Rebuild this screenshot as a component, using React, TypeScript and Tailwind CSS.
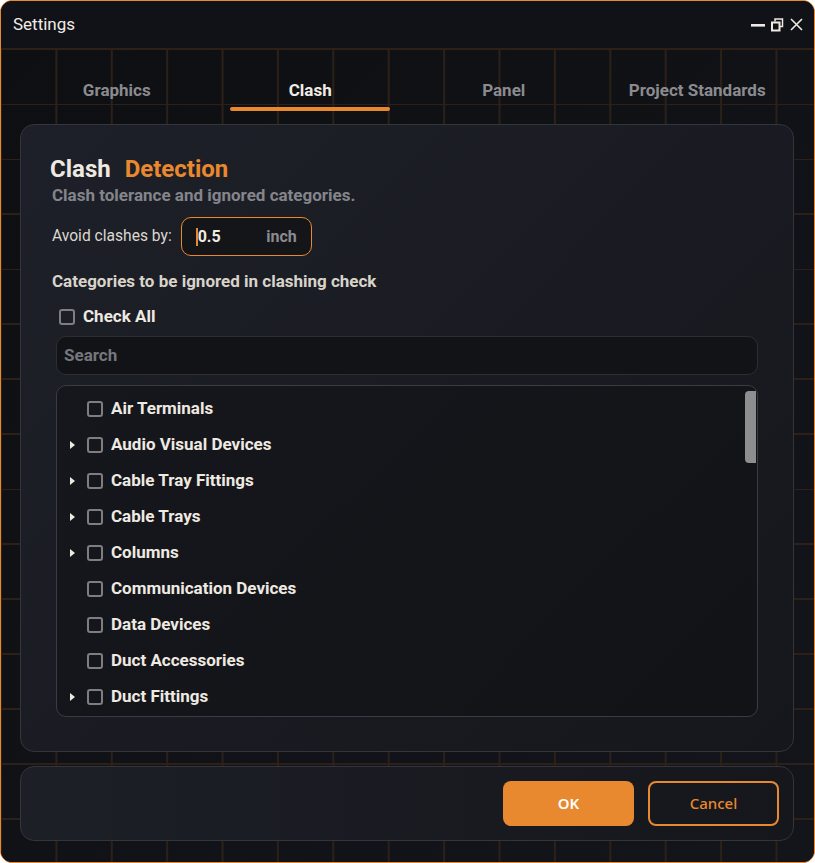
import React from 'react';

const categories: { name: string; expandable: boolean }[] = [
    { name: 'Air Terminals', expandable: false },
    { name: 'Audio Visual Devices', expandable: true },
    { name: 'Cable Tray Fittings', expandable: true },
    { name: 'Cable Trays', expandable: true },
    { name: 'Columns', expandable: true },
    { name: 'Communication Devices', expandable: false },
    { name: 'Data Devices', expandable: false },
    { name: 'Duct Accessories', expandable: false },
    { name: 'Duct Fittings', expandable: true },
];

const tabs = ['Graphics', 'Clash', 'Panel', 'Project Standards'];

function Checkbox() {
    return <span className="block h-[16px] w-[16px] shrink-0 rounded-[3px] border-2 border-[#7e7e82]" />;
}

export default function App() {
    return (
        <div className="flex h-[863px] w-[815px] flex-col overflow-hidden rounded-[12px] border border-[#e8892f] bg-[#0f1014] font-['Roboto',sans-serif] text-[#eeeae2]">
            {/* title bar */}
            <div className="flex h-[47px] shrink-0 items-center justify-between bg-[#111217] pl-[12px] pr-[11px]">
                <span className="text-[17px] leading-none text-[#f0ede6]">Settings</span>
                <div className="flex items-center gap-[6px]">
                    <svg width="14" height="14" viewBox="0 0 14 14">
                        <rect x="0" y="6" width="14" height="2.6" fill="#eeeae2" />
                    </svg>
                    <svg width="13" height="14" viewBox="0 0 13 14">
                        <path d="M4 3.5V1h7.5v7.5H9" fill="none" stroke="#eeeae2" strokeWidth="1.5" />
                        <rect x="1" y="4.5" width="7.5" height="8" fill="none" stroke="#eeeae2" strokeWidth="2" />
                    </svg>
                    <svg width="13" height="13" viewBox="0 0 13 13">
                        <path d="M1 1l11 11M12 1L1 12" stroke="#eeeae2" strokeWidth="1.6" />
                    </svg>
                </div>
            </div>

            {/* grid area */}
            <div className="flex flex-1 flex-col bg-[linear-gradient(to_right,#2c2018_2px,transparent_2px),linear-gradient(to_bottom,#2c2018_2px,transparent_2px),linear-gradient(135deg,#0e0f12,#13151b)] bg-[size:55.4px_55px,55.4px_55px,100%_100%] bg-[position:-1px_0,-1px_0,0_0] pl-[19px] pr-[20px]">
                {/* tabs */}
                <div className="grid h-[76px] shrink-0 grid-cols-4">
                    {tabs.map((tab) => (
                        <div key={tab} className="flex flex-col items-center pt-[31px]">
                            <span
                                className={
                                    tab === 'Clash'
                                        ? 'text-[17px] font-bold leading-[22px] text-[#f0ece4]'
                                        : 'text-[17px] font-bold leading-[22px] text-[#8b8b8f]'
                                }
                            >
                                {tab}
                            </span>
                            {tab === 'Clash' && <span className="mt-[6px] block h-[4px] w-[160px] rounded-full bg-[#e8892f]" />}
                        </div>
                    ))}
                </div>

                {/* main panel */}
                <div className="flex h-[628px] shrink-0 flex-col rounded-[14px] border border-[#33353d] bg-[linear-gradient(135deg,#1e2029,#16171c)] px-[29px] pt-[30px]">
                    <div className="flex items-center gap-[14px] text-[24px] font-bold leading-[28px]">
                        <span className="text-[#eeeae2]">Clash</span>
                        <span className="text-[#e8892f]">Detection</span>
                    </div>
                    <p className="mt-[2px] pl-[2px] text-[17px] font-bold leading-[20px] text-[#84858b]">
                        Clash tolerance and ignored categories.
                    </p>

                    <div className="mt-[12px] flex items-center pl-[2px]">
                        <span className="text-[15.6px] leading-none text-[#dcd8cf]">Avoid clashes by:</span>
                        <div className="ml-[9px] flex h-[39px] w-[131px] items-center rounded-[10px] border border-[#e8892f] bg-[#141519] pl-[14px] pr-[14px]">
                            <span className="h-[18px] w-[2px] bg-[#e8892f]" />
                            <span className="text-[16px] font-bold text-[#f0ece4]">0.5</span>
                            <span className="ml-auto text-[16px] font-bold text-[#8b8b8f]">inch</span>
                        </div>
                    </div>

                    <p className="mt-[14px] pl-[2px] text-[17px] font-bold leading-[22px] text-[#d9d4ca]">
                        Categories to be ignored in clashing check
                    </p>

                    <label className="mt-[14px] flex h-[22px] items-center gap-[8px] pl-[9px]">
                        <Checkbox />
                        <span className="text-[17px] font-bold text-[#eeeae2]">Check All</span>
                    </label>

                    <div className="mx-[6px] mt-[8px] flex h-[39px] shrink-0 items-center rounded-[10px] border border-[#2c2e35] bg-[#121317] px-[7px]">
                        <span className="text-[17px] font-bold text-[#76777c]">Search</span>
                    </div>

                    <div className="relative mx-[6px] mt-[10px] h-[332px] shrink-0 overflow-hidden rounded-[10px] border border-[#3a3c44] bg-[linear-gradient(135deg,#16171c,#121317)] pt-[5px]">
                        {categories.map((cat) => (
                            <div key={cat.name} className="flex h-[36px] items-center pl-[13px]">
                                <span className="flex w-[17px] shrink-0 items-center">
                                    {cat.expandable && (
                                        <span className="block h-0 w-0 border-y-[4px] border-l-[5px] border-y-transparent border-l-[#eeeae2]" />
                                    )}
                                </span>
                                <Checkbox />
                                <span className="ml-[8px] text-[17px] font-bold text-[#eeeae2]">{cat.name}</span>
                            </div>
                        ))}
                        <span className="absolute right-[1px] top-[5px] h-[72px] w-[11px] rounded-l-[4px] bg-[#8e8e91]" />
                    </div>
                </div>

                {/* footer */}
                <div className="mt-[14px] flex h-[75px] shrink-0 items-center justify-end gap-[14px] rounded-[14px] border border-[#33353d] bg-[linear-gradient(to_right,#1d1f27,#16171c)] pr-[14px] font-['Noto_Sans',sans-serif]">
                    <button className="flex h-[45px] w-[131px] items-center justify-center rounded-[8px] bg-[#e8892f] text-[15px] font-semibold text-white">
                        OK
                    </button>
                    <button className="flex h-[45px] w-[131px] items-center justify-center rounded-[8px] border-2 border-[#e8892f] text-[15px] font-medium text-[#e8892f]">
                        Cancel
                    </button>
                </div>
            </div>
        </div>
    );
}
